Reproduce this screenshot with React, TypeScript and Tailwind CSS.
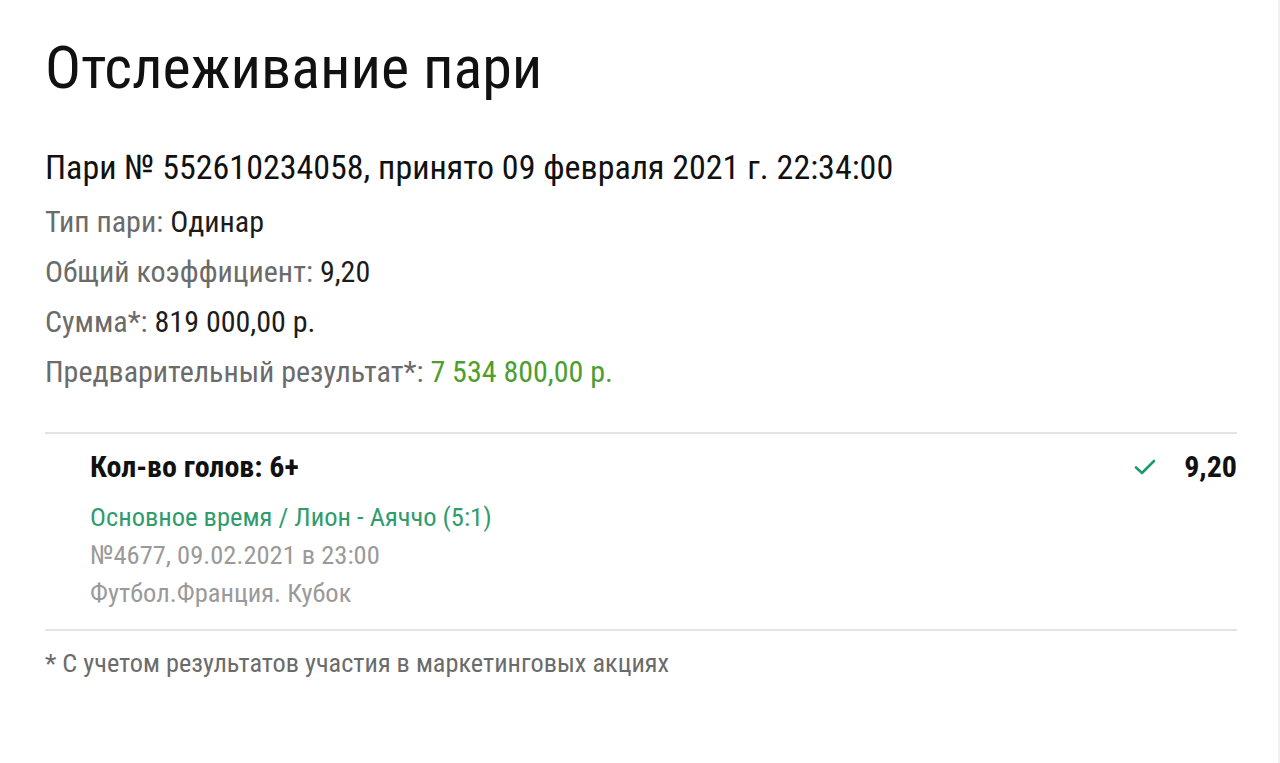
function Check() {
  return (
    <svg width="22" height="18" viewBox="0 0 22 18" fill="none">
      <path d="M2 9.5 L8 15 L20 3" stroke="#1f9a6a" strokeWidth="2.6" strokeLinecap="round" strokeLinejoin="round" />
    </svg>
  );
}

function Row({ label, value, green }: { label: string; value: string; green?: boolean }) {
  return (
    <div className="h-[50px] flex items-center text-[30px] leading-[50px]">
      <span className="text-[#6b6b6b]">{label}</span>
      <span className={green ? "ml-[7px] text-[#4c9e2e]" : "ml-[7px] text-[#1c1c1c]"}>{value}</span>
    </div>
  );
}

export default function App() {
  return (
    <div className="w-[1280px] h-[763px] bg-white border-r-2 border-[#f1f1f1] font-['Roboto_Condensed',Roboto,sans-serif] overflow-hidden">
      <div className="pt-[33px] pl-[45px] pr-[41px]">
        <h1 className="text-[60px] leading-[70px] text-[#111111] font-normal">Отслеживание пари</h1>
        <div className="mt-[39px] text-[34px] leading-[50px] text-[#111111]">
          Пари № 552610234058, принято 09 февраля 2021 г. 22:34:00
        </div>
        <div className="mt-[5px]">
          <Row label="Тип пари:" value="Одинар" />
          <Row label="Общий коэффициент:" value="9,20" />
          <Row label="Сумма*:" value="819 000,00 р." />
          <Row label="Предварительный результат*:" value="7 534 800,00 р." green />
        </div>
        <div className="mt-[35px] border-t-2 border-[#e4e4e4] pl-[45px] pt-[13px] pb-[17px]">
          <div className="flex items-center justify-between h-[40px]">
            <div className="text-[30px] font-bold text-[#111111] leading-[40px]">Кол-во голов: 6+</div>
            <div className="flex items-center gap-[28px]">
              <Check />
              <span className="text-[30px] font-bold text-[#111111] leading-[40px]">9,20</span>
            </div>
          </div>
          <div className="mt-[11px] text-[26.5px] leading-[38px]">
            <div className="text-[#2f9c6e]">Основное время / Лион - Аяччо (5:1)</div>
            <div className="text-[#9a9a9a]">№4677, 09.02.2021 в 23:00</div>
            <div className="text-[#9a9a9a]">Футбол.Франция. Кубок</div>
          </div>
        </div>
        <div className="border-t-2 border-[#e4e4e4] pt-[17px] text-[26.3px] leading-[30px] text-[#6b6b6b]">
          * С учетом результатов участия в маркетинговых акциях
        </div>
      </div>
    </div>
  );
}
